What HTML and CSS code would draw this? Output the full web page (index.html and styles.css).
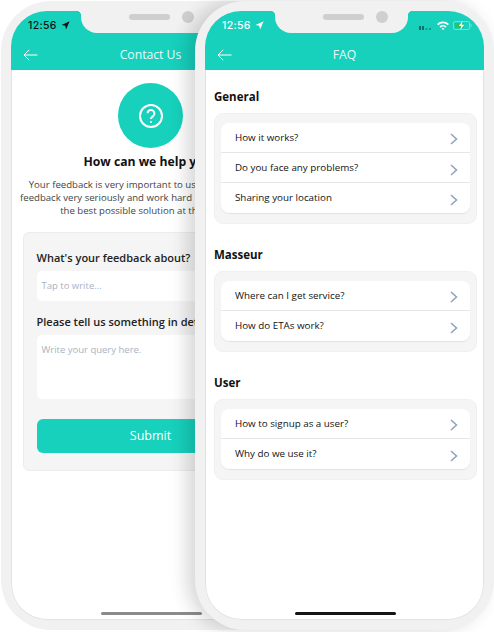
FILE: index.html
```html
<!DOCTYPE html>
<html lang="en">
<head>
    <meta charset="UTF-8">
    <meta name="viewport" content="width=device-width, initial-scale=1.0">
    <title>Contact Us and FAQ</title>
    <link rel="stylesheet" href="styles.css">
</head>
<body>
    <div class="escena">
        <!-- Contact phone -->
        <div class="telefono telefono-atras">
            <div class="pantalla">
                <div class="cabecera">
                    <div class="estado">
                        <span class="hora">12:56</span>
                        <svg class="flecha-gps oscuro" viewBox="0 0 10 10"><path d="M9.6.4.6 4.4l4.2.8.8 4.2z"/></svg>
                    </div>
                    <div class="barra">
                        <svg class="atras" viewBox="0 0 15 12"><path d="M14.5 6H1M6.2.8 1 6l5.2 5.2"/></svg>
                        <span class="titulo">Contact Us</span>
                    </div>
                </div>
                <div class="contacto">
                    <div class="circulo">
                        <svg viewBox="0 0 26 26" class="pregunta">
                            <circle cx="13" cy="13" r="11"/>
                            <path d="M9.6 10.3a3.4 3.4 0 1 1 5.4 2.8c-1.3.9-2 1.4-2 2.9"/>
                            <circle class="punto" cx="13" cy="19" r="1.1"/>
                        </svg>
                    </div>
                    <h2>How can we help you?</h2>
                    <p class="aviso">Your feedback is very important to us. We take all your<br>feedback very seriously and work hard to provide you with<br>the best possible solution at the earliest.</p>
                    <form class="formulario">
                        <label>What's your feedback about?</label>
                        <div class="campo">Tap to write...</div>
                        <label class="segunda">Please tell us something in detail</label>
                        <div class="campo area">Write your query here.</div>
                        <div class="enviar">Submit</div>
                    </form>
                </div>
                <div class="indicador gris"></div>
            </div>
            <div class="muesca"><span class="altavoz"></span><span class="camara"></span></div>
        </div>

        <!-- FAQ phone -->
        <div class="telefono telefono-frente">
            <div class="pantalla">
                <div class="cabecera">
                    <div class="estado">
                        <span class="hora">12:56</span>
                        <svg class="flecha-gps" viewBox="0 0 10 10"><path d="M9.6.4.6 4.4l4.2.8.8 4.2z"/></svg>
                        <div class="iconos">
                            <svg class="senal" viewBox="0 0 14 5"><path d="M0 1h2v4H0zM3 1h2v4H3z" fill="#0d6f66"/><path d="M6.500 3h2v2h-2zM10 3h2v2h-2z" fill="#0f9d90"/></svg>
                            <svg class="wifi" viewBox="0 0 12 9"><path d="M0 3a8.500 8.500 0 0 1 12 0l-1.300 1.300a6.700 6.700 0 0 0-9.400 0zM2.400 5.400a5 5 0 0 1 7.200 0L8.300 6.700a3.200 3.200 0 0 0-4.600 0zM4.700 7.700a1.800 1.800 0 0 1 2.600 0L6 9z"/></svg>
                            <svg class="bateria" viewBox="0 0 19 9">
                                <rect x=".5" y=".5" width="16" height="8" rx="1.500" fill="none" stroke="#6fe0cf"/>
                                <rect x="2" y="2" width="9" height="5" fill="#35c14f"/>
                                <rect x="17.500" y="3" width="1" height="3" fill="#6fe0cf"/>
                                <path d="M9.500 0 5.800 5h2.400l-.9 4 3.900-5.200H8.800z" fill="#fff"/>
                            </svg>
                        </div>
                    </div>
                    <div class="barra">
                        <svg class="atras" viewBox="0 0 15 12"><path d="M14.5 6H1M6.2.8 1 6l5.2 5.2"/></svg>
                        <span class="titulo">FAQ</span>
                    </div>
                </div>
                <div class="faq">
                    <h3>General</h3>
                    <div class="grupo">
                        <ul class="lista">
                            <li>How it works?<svg class="chevron" viewBox="0 0 8 12"><path d="M1 1l5.500 5L1 11"/></svg></li>
                            <li>Do you face any problems?<svg class="chevron" viewBox="0 0 8 12"><path d="M1 1l5.500 5L1 11"/></svg></li>
                            <li>Sharing your location<svg class="chevron" viewBox="0 0 8 12"><path d="M1 1l5.500 5L1 11"/></svg></li>
                        </ul>
                    </div>
                    <h3>Masseur</h3>
                    <div class="grupo">
                        <ul class="lista">
                            <li>Where can I get service?<svg class="chevron" viewBox="0 0 8 12"><path d="M1 1l5.500 5L1 11"/></svg></li>
                            <li>How do ETAs work?<svg class="chevron" viewBox="0 0 8 12"><path d="M1 1l5.500 5L1 11"/></svg></li>
                        </ul>
                    </div>
                    <h3>User</h3>
                    <div class="grupo">
                        <ul class="lista">
                            <li>How to signup as a user?<svg class="chevron" viewBox="0 0 8 12"><path d="M1 1l5.500 5L1 11"/></svg></li>
                            <li>Why do we use it?<svg class="chevron" viewBox="0 0 8 12"><path d="M1 1l5.500 5L1 11"/></svg></li>
                        </ul>
                    </div>
                </div>
                <div class="indicador"></div>
            </div>
            <div class="muesca"><span class="altavoz"></span><span class="camara"></span></div>
        </div>
    </div>
</body>
</html>
```
FILE: styles.css
```css
* {
    margin: 0;
    padding: 0;
    box-sizing: border-box;
}

:root {
    --verde: #17d1bd;
    --marco: #f1f1f1;
    --tarjeta: #f5f5f5;
    --linea: #e6e6e6;
}

body {
    background: #fff;
    font-family: "Open Sans", sans-serif;
}

.escena {
    position: relative;
    width: 494px;
    height: 632px;
    overflow: hidden;
}

.telefono {
    position: absolute;
    top: 1px;
    width: 299px;
    height: 629px;
    padding: 10px;
    background: var(--marco);
    border-radius: 50px;
}

.telefono-atras {
    left: 1px;
}

.telefono-frente {
    left: 195px;
    box-shadow: -8px 0 18px rgba(0, 0, 0, 0.16);
}

.pantalla {
    position: relative;
    height: 100%;
    background: #fff;
    border-radius: 36px;
    overflow: hidden;
    box-shadow: inset 0 0 0 1px #e2e2e2;
}

/* Teal top */
.cabecera {
    height: 59px;
    background: var(--verde);
    color: #fff;
}

.estado {
    height: 29px;
    padding: 0 12px 0 17px;
    display: flex;
    align-items: center;
}

.hora {
    font-family: "Inter", sans-serif;
    font-size: 10.5px;
    font-weight: 500;
    letter-spacing: 0.3px;
}

.flecha-gps {
    width: 9px;
    height: 9px;
    margin-left: 4px;
    fill: #fff;
}

.flecha-gps.oscuro {
    fill: #111;
}

.telefono-atras .hora {
    color: #111;
}

.iconos {
    margin-left: auto;
    display: flex;
    align-items: center;
    gap: 4px;
}

.senal {
    width: 14px;
    height: 5px;
    margin-top: 3px;
}

.wifi {
    width: 12px;
    height: 9px;
    fill: #fff;
}

.bateria {
    width: 19px;
    height: 9px;
}

.barra {
    position: relative;
    height: 30px;
    padding-bottom: 1px;
    display: flex;
    align-items: center;
    justify-content: center;
}

.atras {
    position: absolute;
    left: 12px;
    top: 9px;
    width: 15px;
    height: 12px;
    fill: none;
    stroke: #fff;
    stroke-width: 1;
}

.titulo {
    font-size: 12.2px;
    opacity: 0.9;
}

/* Notch */
.muesca {
    position: absolute;
    top: 10px;
    left: 80px;
    width: 133px;
    height: 22px;
    padding-left: 28px;
    background: var(--marco);
    border-radius: 0 0 16px 16px;
    display: flex;
    justify-content: center;
    align-items: flex-start;
    gap: 12px;
}

.muesca::before,
.muesca::after {
    content: "";
    position: absolute;
    top: 0;
    width: 5px;
    height: 5px;
}

.muesca::before {
    left: -5px;
    background: radial-gradient(circle at 0 100%, transparent 5px, var(--marco) 5.5px);
}

.muesca::after {
    right: -5px;
    background: radial-gradient(circle at 100% 100%, transparent 5px, var(--marco) 5.5px);
}

.altavoz {
    width: 41px;
    height: 6px;
    margin-top: 3px;
    border-radius: 3px;
    background: #cfcfcf;
}

.camara {
    width: 12px;
    height: 12px;
    border-radius: 50%;
    background: #cfcfcf;
}

/* Contact screen */
.contacto {
    padding: 13px 12px 0;
    display: flex;
    flex-direction: column;
    align-items: center;
}

.circulo {
    width: 65px;
    height: 65px;
    border-radius: 50%;
    background: var(--verde);
    display: flex;
    align-items: center;
    justify-content: center;
}

.pregunta {
    width: 26px;
    height: 26px;
    fill: none;
    stroke: #fff;
    stroke-width: 2;
}

.pregunta .punto {
    fill: #fff;
    stroke: none;
}

h2 {
    margin-top: 5px;
    font-size: 12.2px;
    line-height: 18px;
    font-weight: 700;
    color: #111;
}

.aviso {
    margin-top: 7px;
    font-size: 9.6px;
    line-height: 13px;
    color: #444;
    text-align: center;
    white-space: nowrap;
}

.formulario {
    width: 256px;
    height: 239px;
    margin-top: 15px;
    padding: 17px 13px 0;
    background: var(--tarjeta);
    border: 1px solid #ececec;
    border-radius: 6px;
    display: flex;
    flex-direction: column;
}

.formulario label {
    font-size: 11px;
    line-height: 16px;
    font-weight: 600;
    color: #222;
}

.formulario .segunda {
    margin-top: 13px;
}

.campo {
    height: 30px;
    margin-top: 5px;
    padding: 0 5px;
    background: #fff;
    border-radius: 5px;
    font-size: 9.5px;
    line-height: 30px;
    color: #a9b2c3;
}

.campo.area {
    height: 64px;
}

.enviar {
    height: 34px;
    margin-top: 20px;
    background: var(--verde);
    border-radius: 6px;
    color: #fff;
    font-size: 12.5px;
    font-weight: 500;
    line-height: 34px;
    text-align: center;
}

.indicador {
    position: absolute;
    left: 50%;
    bottom: 5px;
    width: 101px;
    height: 3px;
    margin-left: -50px;
    border-radius: 2px;
    background: #151515;
}

.indicador.gris {
    background: #8b8b8b;
}

/* FAQ screen */
.faq {
    padding: 18px 7px 0 9px;
}

h3 {
    height: 17px;
    font-size: 11.5px;
    line-height: 17px;
    font-weight: 700;
    color: #111;
}

.grupo {
    margin-top: 8px;
    margin-bottom: 22px;
    padding: 9px 6px 10px;
    background: var(--tarjeta);
    border: 1px solid #f0f0f0;
    border-radius: 9px;
}

.lista {
    list-style: none;
    background: #fff;
    border-radius: 8px;
    box-shadow: 0 1px 1px rgba(0, 0, 0, 0.08);
}

.lista li {
    height: 30px;
    padding: 0 12px 0 14px;
    display: flex;
    align-items: center;
    justify-content: space-between;
    font-size: 9.8px;
    font-weight: 500;
    color: #111;
    border-top: 1px solid var(--linea);
}

.lista li:first-child {
    height: 29px;
    padding-bottom: 1px;
    border-top: 0;
}

.lista li:last-child {
    height: 31px;
    padding-bottom: 1px;
}

.chevron {
    width: 8px;
    height: 12px;
    margin-top: 4px;
    fill: none;
    stroke: #8ea2bb;
    stroke-width: 1.5;
}
```
